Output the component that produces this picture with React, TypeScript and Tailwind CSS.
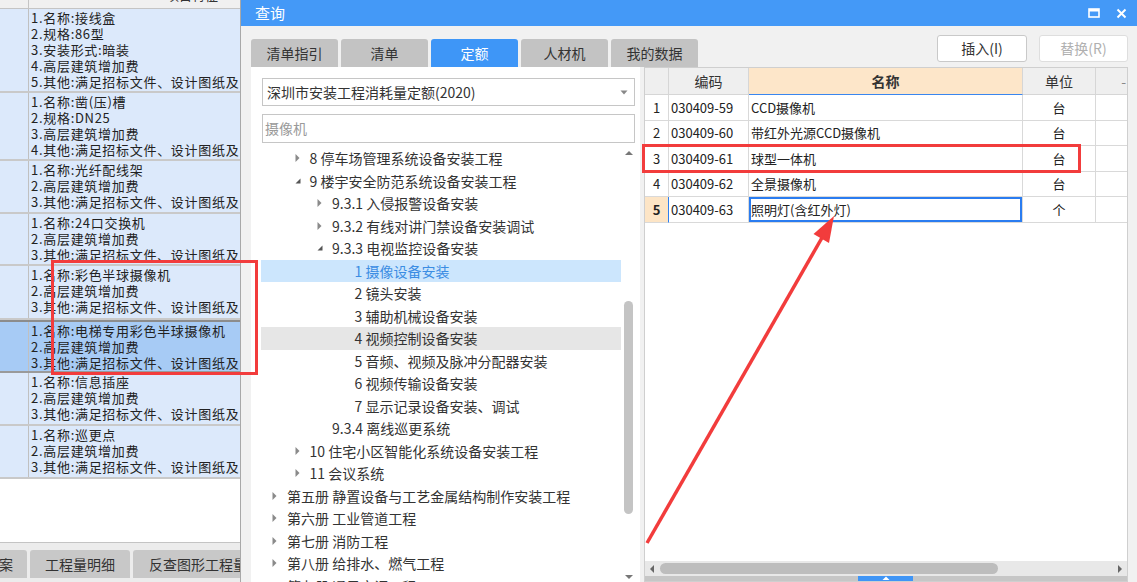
import React from "react";

const LEFT_ROWS: { h: string; lines: string[]; active?: boolean }[] = [
  {
    h: "h-[84px]",
    lines: ["1.名称:接线盒", "2.规格:86型", "3.安装形式:暗装", "4.高层建筑增加费", "5.其他:满足招标文件、设计图纸及"],
  },
  {
    h: "h-[68px]",
    lines: ["1.名称:凿(压)槽", "2.规格:DN25", "3.高层建筑增加费", "4.其他:满足招标文件、设计图纸及"],
  },
  { h: "h-[53px]", lines: ["1.名称:光纤配线架", "2.高层建筑增加费", "3.其他:满足招标文件、设计图纸及"] },
  { h: "h-[52px]", lines: ["1.名称:24口交换机", "2.高层建筑增加费", "3.其他:满足招标文件、设计图纸及"] },
  { h: "h-[54px]", lines: ["1.名称:彩色半球摄像机", "2.高层建筑增加费", "3.其他:满足招标文件、设计图纸及"] },
  {
    h: "h-[53px]",
    lines: ["1.名称:电梯专用彩色半球摄像机", "2.高层建筑增加费", "3.其他:满足招标文件、设计图纸及"],
    active: true,
  },
  { h: "h-[53px]", lines: ["1.名称:信息插座", "2.高层建筑增加费", "3.其他:满足招标文件、设计图纸及"] },
  { h: "h-[53px]", lines: ["1.名称:巡更点", "2.高层建筑增加费", "3.其他:满足招标文件、设计图纸及"] },
];

type Node = { lv: number; label: string; arrow?: "c" | "e"; sel?: boolean; hover?: boolean };

const TREE: Node[] = [
  { lv: 1, label: "8 停车场管理系统设备安装工程", arrow: "c" },
  { lv: 1, label: "9 楼宇安全防范系统设备安装工程", arrow: "e" },
  { lv: 2, label: "9.3.1 入侵报警设备安装", arrow: "c" },
  { lv: 2, label: "9.3.2 有线对讲门禁设备安装调试", arrow: "c" },
  { lv: 2, label: "9.3.3 电视监控设备安装", arrow: "e" },
  { lv: 3, label: "1 摄像设备安装", sel: true },
  { lv: 3, label: "2 镜头安装" },
  { lv: 3, label: "3 辅助机械设备安装" },
  { lv: 3, label: "4 视频控制设备安装", hover: true },
  { lv: 3, label: "5 音频、视频及脉冲分配器安装" },
  { lv: 3, label: "6 视频传输设备安装" },
  { lv: 3, label: "7 显示记录设备安装、调试" },
  { lv: 2, label: "9.3.4 离线巡更系统" },
  { lv: 1, label: "10 住宅小区智能化系统设备安装工程", arrow: "c" },
  { lv: 1, label: "11 会议系统", arrow: "c" },
  { lv: 0, label: "第五册 静置设备与工艺金属结构制作安装工程", arrow: "c" },
  { lv: 0, label: "第六册 工业管道工程", arrow: "c" },
  { lv: 0, label: "第七册 消防工程", arrow: "c" },
  { lv: 0, label: "第八册 给排水、燃气工程", arrow: "c" },
  { lv: 0, label: "第九册 通风空调工程", arrow: "c" },
];

const INDENT = ["pl-[10px]", "pl-[32.5px]", "pl-[55px]", "pl-[77.5px]"];

const QUOTA = [
  ["1", "030409-59", "CCD摄像机", "台"],
  ["2", "030409-60", "带红外光源CCD摄像机", "台"],
  ["3", "030409-61", "球型一体机", "台"],
  ["4", "030409-62", "全景摄像机", "台"],
  ["5", "030409-63", "照明灯(含红外灯)", "个"],
];

const TABS = ["清单指引", "清单", "定额", "人材机", "我的数据"];

function Arrow({ kind }: { kind?: "c" | "e" }) {
  if (kind === "e")
    return (
      <svg width="8" height="8" viewBox="0 0 8 8">
        <polygon points="6.5,1.5 6.5,6.5 1.5,6.5" fill="#555" />
      </svg>
    );
  if (kind === "c")
    return (
      <svg width="8" height="10" viewBox="0 0 8 10">
        <polygon points="1.5,1 5.5,5 1.5,9" fill="#8a8a8a" />
      </svg>
    );
  return null;
}

function LeftSheet() {
  return (
    <div className="w-[241px] shrink-0 h-full flex flex-col border-r border-[#a8a8a8] bg-white">
      <div className="h-[9px] shrink-0 grid grid-cols-[29px_1fr] bg-[#f0f0f0] border-b border-[#c4c4c4] overflow-hidden">
        <div className="border-r border-[#c4c4c4]" />
        <div className="flex justify-end pr-[22px] overflow-hidden">
          <div className="-mt-[13px] leading-[16px] text-[13px] text-[#333]">项目特征</div>
        </div>
      </div>
      {LEFT_ROWS.map((r, i) => (
        <div
          key={i}
          className={[
            "shrink-0 grid grid-cols-[29px_1fr] border-b-2 overflow-hidden",
            r.h,
            r.active ? "bg-[#a7cbf5] border-[#9a9a9a] border-t-2 border-t-[#8c8c8c]" : "bg-[#dce9fb] border-[#c9c9c9]",
          ].join(" ")}
        >
          <div className="border-r border-[#c0c0c0]" />
          <div className="pl-[2px] pt-[1px] overflow-hidden">
            {r.lines.map((l) => (
              <div
                key={l}
                className="h-[16px] leading-[16px] text-[13px] tracking-[0.7px] text-[#222] whitespace-nowrap"
              >
                {l}
              </div>
            ))}
          </div>
        </div>
      ))}
      <div className="flex-1 bg-white border-b border-[#c4c4c4]" />
      <div className="h-[39px] shrink-0 bg-[#ececec] pt-[7px] flex gap-[3px] overflow-hidden">
        <div className="w-[27px] shrink-0 h-[28px] bg-[#c8c8c8] rounded-tr-[3px] flex items-center justify-end pr-[14px] overflow-hidden text-[14px] text-[#333] whitespace-nowrap">
          方案
        </div>
        <div className="w-[100px] shrink-0 h-[28px] bg-[#c8c8c8] rounded-t-[3px] flex items-center justify-center text-[14px] text-[#333]">
          工程量明细
        </div>
        <div className="w-[120px] shrink-0 h-[28px] bg-[#c8c8c8] rounded-t-[3px] flex items-center pl-[16px] text-[14px] text-[#333] whitespace-nowrap">
          反查图形工程量
        </div>
      </div>
    </div>
  );
}

function TreePane() {
  return (
    <div className="w-[389px] shrink-0 h-full bg-white flex flex-col">
      <div className="mt-[11px] ml-[11px] w-[373px] h-[28px] border border-[#c6c6c6] flex items-center pl-[4px] pr-[6px] text-[14px] text-[#333]">
        <span className="flex-1">深圳市安装工程消耗量定额(2020)</span>
        <svg width="8" height="5" viewBox="0 0 8 5">
          <polygon points="0.5,0.5 7.5,0.5 4,4.5" fill="#888" />
        </svg>
      </div>
      <div className="mt-[8px] ml-[11px] w-[373px] h-[29px] border border-[#c6c6c6] flex items-center pl-[2px] text-[14px] text-[#9a9a9a]">
        摄像机
      </div>
      <div className="mt-[4px] flex-1 flex overflow-hidden">
        <div className="ml-[10px] w-[360px] overflow-hidden">
          {TREE.map((n) => (
            <div
              key={n.label}
              className={[
                "h-[22.5px] flex items-center text-[14px] whitespace-nowrap",
                INDENT[n.lv],
                n.sel ? "bg-[#cce6fd] text-[#3b8de3]" : n.hover ? "bg-[#e6e6e6] text-[#333]" : "text-[#333]",
              ].join(" ")}
            >
              <span className="w-[16px] shrink-0 flex items-center">
                <Arrow kind={n.arrow} />
              </span>
              <span className="leading-[20px]">{n.label}</span>
            </div>
          ))}
        </div>
        <div className="w-[15px] shrink-0 flex flex-col items-center bg-white">
          <svg width="10" height="8" viewBox="0 0 10 8" className="mt-[2px]">
            <polygon points="1,6 5,2 9,6" fill="#777" />
          </svg>
          <div className="mt-[144px] w-[9px] h-[213px] rounded-full bg-[#c4c4c4]" />
          <div className="flex-1" />
          <svg width="10" height="8" viewBox="0 0 10 8" className="mb-[1px]">
            <polygon points="1,2 5,6 9,2" fill="#777" />
          </svg>
        </div>
        <div className="w-[4px] shrink-0" />
      </div>
    </div>
  );
}

function QuotaPane() {
  const cols = "grid grid-cols-[24px_80px_274px_73px_1fr]";
  return (
    <div className="flex-1 h-full bg-white border border-[#cfcfcf] flex flex-col">
      <div className={`${cols} h-[27px] shrink-0 bg-[#efefef] text-[14px] text-[#333]`}>
        <div className="border-r border-b border-[#d6d6d6]" />
        <div className="border-r border-b border-[#d6d6d6] flex items-center justify-center">编码</div>
        <div className="border-r border-b border-b-[#3a86ef] border-r-[#d6d6d6] bg-[#fde6c9] flex items-center justify-center font-bold">
          名称
        </div>
        <div className="border-r border-b border-[#d6d6d6] flex items-center justify-center">单位</div>
        <div className="border-b border-[#d6d6d6] flex items-center justify-end pr-[1px] text-[#888]">-</div>
      </div>
      {QUOTA.map((r) => {
        const on = r[0] === "5";
        return (
          <div key={r[0]} className={`${cols} h-[25.6px] shrink-0 text-[13px] text-[#222]`}>
            <div
              className={[
                "border-r border-b border-[#d9d9d9] flex items-center justify-center",
                on ? "bg-[#fde5c6] font-bold border-r-[#2f80f0]" : "",
              ].join(" ")}
            >
              {r[0]}
            </div>
            <div className="border-r border-b border-[#d9d9d9] flex items-center pl-[2px]">{r[1]}</div>
            <div
              className={[
                "border-r border-b border-[#d9d9d9] flex items-center pl-[2px]",
                on ? "ring-2 ring-inset ring-[#2a7cf0]" : "",
              ].join(" ")}
            >
              {r[2]}
            </div>
            <div className="border-r border-b border-[#d9d9d9] flex items-center justify-center">{r[3]}</div>
            <div className="border-b border-[#d9d9d9]" />
          </div>
        );
      })}
      <div className="flex-1" />
      <div className="h-[15px] shrink-0 bg-[#e8e8e8] flex items-center px-[4px] gap-[5px]">
        <svg width="6" height="10" viewBox="0 0 6 10">
          <polygon points="5,1 1,5 5,9" fill="#666" />
        </svg>
        <div className="w-[338px] h-[11px] rounded-full bg-[#bdbdbd]" />
        <div className="flex-1" />
        <svg width="6" height="10" viewBox="0 0 6 10">
          <polygon points="1,1 5,5 1,9" fill="#666" />
        </svg>
      </div>
      <div className="h-[5px] shrink-0 bg-[#c6c6c6] flex">
        <div className="ml-[213px] w-[55px] h-full bg-[#3f95f6] flex justify-center">
          <svg width="8" height="4" viewBox="0 0 8 4">
            <polygon points="0.5,4 4,0.5 7.5,4" fill="#fff" />
          </svg>
        </div>
      </div>
    </div>
  );
}

function QueryDialog() {
  return (
    <div className="flex-1 h-full flex flex-col bg-[#f1f1f1]">
      <div className="h-[26px] shrink-0 bg-[#4499f7] flex items-center pl-[14px] pr-[10px] text-white text-[15px]">
        <span className="flex-1">查询</span>
        <svg width="12" height="10" viewBox="0 0 12 10" className="mr-[16px]">
          <rect x="1" y="1" width="10" height="8" fill="none" stroke="#fff" strokeWidth="1.6" />
          <rect x="1" y="1" width="10" height="2.5" fill="#fff" />
        </svg>
        <svg width="11" height="11" viewBox="0 0 11 11">
          <path d="M1.5 1.5 L9.5 9.5 M9.5 1.5 L1.5 9.5" stroke="#fff" strokeWidth="2" />
        </svg>
      </div>
      <div className="h-[41px] shrink-0 flex pl-[10px] pr-[9px]">
        <div className="mt-[13px] flex gap-[3px]">
          {TABS.map((t) => (
            <div
              key={t}
              className={[
                "w-[87px] h-[28px] rounded-t-[3px] flex items-center justify-center text-[14px]",
                t === "定额" ? "bg-[#3e96f7] text-white" : "bg-[#c3c3c3] text-[#333]",
              ].join(" ")}
            >
              {t}
            </div>
          ))}
        </div>
        <div className="ml-auto mt-[9px] flex gap-[12px]">
          <div className="w-[90px] h-[27px] bg-white border border-[#c9c9c9] rounded-[3px] flex items-center justify-center text-[14px] text-[#333]">
            插入(I)
          </div>
          <div className="w-[89px] h-[27px] bg-white border border-[#dedede] rounded-[3px] flex items-center justify-center text-[14px] text-[#b0b0b0]">
            替换(R)
          </div>
        </div>
      </div>
      <div className="flex-1 flex pl-[10px] pr-[9px] gap-[4px] overflow-hidden">
        <TreePane />
        <QuotaPane />
      </div>
    </div>
  );
}

export default function App() {
  return (
    <div className="relative w-[1137px] h-[582px] overflow-hidden flex font-['Noto_Sans_CJK_SC',sans-serif] bg-white">
      <LeftSheet />
      <QueryDialog />

      {/* red annotations */}
      <div className="absolute left-[51px] top-[260px] w-[207px] h-[115px] border-[3px] border-[#f23c3c] pointer-events-none" />
      <div className="absolute left-[642px] top-[144px] w-[439px] h-[29px] border-[3px] border-[#f23c3c] pointer-events-none" />
      <svg className="absolute left-0 top-0 pointer-events-none" width="1137" height="582" viewBox="0 0 1137 582">
        <line x1="647" y1="543" x2="823" y2="236" stroke="#f23c3c" strokeWidth="3.5" />
        <polygon points="834,216 829,243 813.5,234" fill="#f23c3c" />
      </svg>
    </div>
  );
}
